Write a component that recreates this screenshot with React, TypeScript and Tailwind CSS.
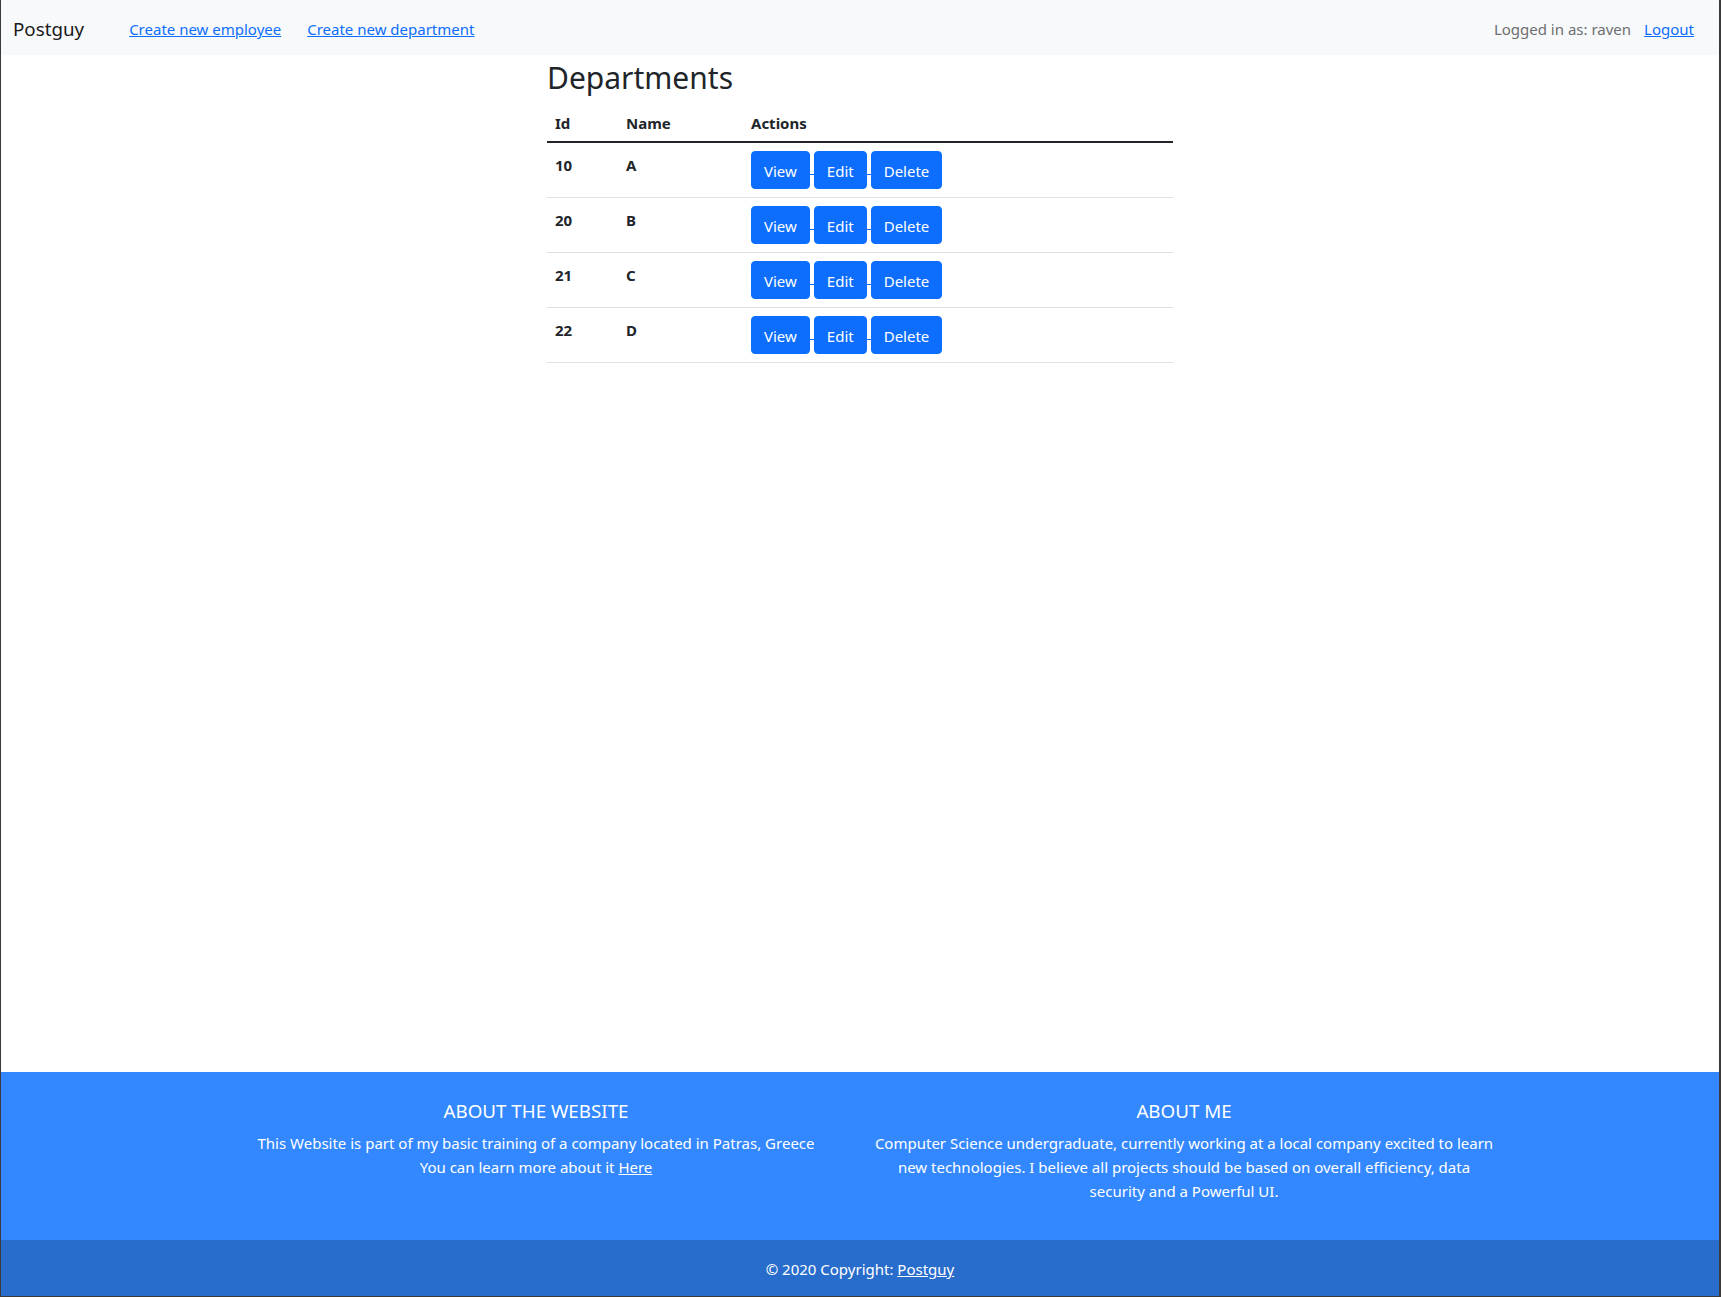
import React from "react";

const rows = [
  { id: "10", name: "A" },
  { id: "20", name: "B" },
  { id: "21", name: "C" },
  { id: "22", name: "D" },
];

function Btn({ children }: { children: React.ReactNode }) {
  return (
    <span className="inline-flex h-[38px] items-center rounded-[4px] border border-[#0d6efd] bg-[#0d6efd] px-3 pt-[2px] text-[15px] leading-6 text-white">
      {children}
    </span>
  );
}

function Sep() {
  return (
    <span className="relative inline-block h-[38px] w-[4px]">
      <span className="absolute left-0 right-0 top-[23px] h-px bg-[#0d6efd]" />
    </span>
  );
}

export default function App() {
  return (
    <div className="flex min-h-screen flex-col border-b border-l border-r-2 border-[#3a3a3a] bg-white font-['Noto_Sans',sans-serif] text-[15px] leading-6 text-[#212529]">
      <nav className="flex h-[55px] items-center bg-[#f8f9fa] pl-3 pr-[25px] pt-[3px]">
        <span className="text-[18.75px] leading-[30px] text-[#1a1a1a]">Postguy</span>
        <a href="#" className="ml-[45px] text-[#0d6efd] underline">
          Create new employee
        </a>
        <a href="#" className="ml-[26px] text-[#0d6efd] underline">
          Create new department
        </a>
        <div className="ml-auto flex items-center">
          <span className="text-[#6e6f70]">Logged in as: raven</span>
          <a href="#" className="ml-[13px] text-[#0d6efd] underline">
            Logout
          </a>
        </div>
      </nav>

      <main className="flex-1">
        <div className="mx-auto w-[626px] pt-[6px]">
          <h2 className="mb-[6px] text-[30px] leading-[34px] font-normal text-[#212529]">Departments</h2>
          <table className="w-full border-collapse text-left">
            <thead>
              <tr className="border-b-2 border-[#212529]">
                <th className="w-[71px] px-2 pt-[10px] pb-[6px] font-bold">Id</th>
                <th className="w-[125px] px-2 pt-[10px] pb-[6px] font-bold">Name</th>
                <th className="px-2 pt-[10px] pb-[6px] font-bold">Actions</th>
              </tr>
            </thead>
            <tbody>
              {rows.map((r) => (
                <tr key={r.id} className="border-b border-[#dee2e6]">
                  <td className="px-2 pt-[10px] pb-[6px] align-top font-bold">{r.id}</td>
                  <td className="px-2 pt-[10px] pb-[6px] align-top font-bold">{r.name}</td>
                  <td className="px-2 py-2 align-top">
                    <div className="flex">
                      <Btn>View</Btn>
                      <Sep />
                      <Btn>Edit</Btn>
                      <Sep />
                      <Btn>Delete</Btn>
                    </div>
                  </td>
                </tr>
              ))}
            </tbody>
          </table>
        </div>
      </main>

      <footer className="text-white">
        <div className="bg-[#3388ff]">
          <div className="mx-auto grid w-[1320px] grid-cols-2 gap-6 px-6 pt-[27px] pb-[21px]">
            <div className="text-center">
              <h5 className="mb-2 text-[18.75px] leading-6 font-normal uppercase">About the website</h5>
              <p className="mb-4 whitespace-nowrap">
                This Website is part of my basic training of a company located in Patras, Greece
                <br />
                You can learn more about it{" "}
                <a href="#" className="text-white underline">
                  Here
                </a>
              </p>
            </div>
            <div className="text-center">
              <h5 className="mb-2 text-[18.75px] leading-6 font-normal uppercase">About me</h5>
              <p className="mb-4 whitespace-nowrap">
                Computer Science undergraduate, currently working at a local company excited to learn
                <br />
                new technologies. I believe all projects should be based on overall efficiency, data
                <br />
                security and a Powerful UI.
              </p>
            </div>
          </div>
        </div>
        <div className="bg-[#296dcc] pt-[17px] pb-[15px] text-center">
          © 2020 Copyright:{" "}
          <a href="#" className="text-white underline">
            Postguy
          </a>
        </div>
      </footer>
    </div>
  );
}
